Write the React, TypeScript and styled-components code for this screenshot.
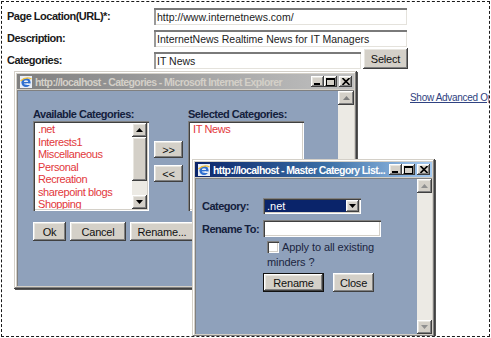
import React from "react";
import styled, { createGlobalStyle, css } from "styled-components";

const GlobalStyle = createGlobalStyle`
  html, body { margin: 0; padding: 0; background: #fff; }
  body { font-family: "Liberation Sans", Arial, sans-serif; }
  * { box-sizing: border-box; }
`;

const raised = css`
  background: #d4d0c8;
  box-shadow: inset -1px -1px #404040, inset 1px 1px #fff, inset -2px -2px #808080,
    inset 2px 2px #e8e6e0;
`;

const sunken = css`
  box-shadow: inset 1px 1px #808080, inset 2px 2px #404040, inset -1px -1px #fff,
    inset -2px -2px #d4d0c8;
`;

const Page = styled.div`
  position: relative;
  width: 489px;
  height: 336px;
  margin: 1px;
  border: 1px dashed #1a1a1a;
  overflow: hidden;
  background: #fff;
`;

const Form = styled.div`
  display: grid;
  grid-template-columns: 147px auto;
  grid-auto-rows: 22px;
  align-items: end;
  padding: 1px 0 0 5px;
`;

const Label = styled.div`
  align-self: center;
  padding-top: 4px;
  font-size: 11px;
  font-weight: bold;
  letter-spacing: -0.5px;
  color: #1a1a1a;
`;

const FieldRow = styled.div`
  display: flex;
  align-items: flex-end;
  gap: 2px;
`;

const TextField = styled.div<{ $w: number }>`
  width: ${(p) => p.$w}px;
  height: 17px;
  padding: 3px 0 0 3px;
  background: #fff;
  font-size: 10.5px;
  color: #222;
  white-space: nowrap;
  overflow: hidden;
  box-shadow: inset 0 2px #7a7a7a, inset 2px 0 #9a9a9a, inset -1px -1px #e4e2dc;
`;

const Button = styled.div<{ $w: number; $h?: number; $default?: boolean }>`
  ${raised};
  width: ${(p) => p.$w}px;
  height: ${(p) => p.$h ?? 19}px;
  display: flex;
  align-items: center;
  justify-content: center;
  font-size: 11px;
  letter-spacing: -0.2px;
  color: #111;
  white-space: nowrap;
  overflow: hidden;
  ${(p) =>
    p.$default &&
    css`
      border: 1px solid #111;
    `}
`;

const LinkRow = styled.div`
  margin-top: 23px;
  padding-left: 408px;
  white-space: nowrap;
  font-size: 10px;
  letter-spacing: -0.3px;
  color: #2f4281;
  text-decoration: underline;
`;

const Window = styled.div<{ $left: number; $top: number; $w: number; $h: number }>`
  position: absolute;
  left: ${(p) => p.$left}px;
  top: ${(p) => p.$top}px;
  width: ${(p) => p.$w}px;
  height: ${(p) => p.$h}px;
  padding: 3px;
  background: #d4d0c8;
  box-shadow: inset -1px -1px #404040, inset 1px 1px #d4d0c8, inset -2px -2px #808080,
    inset 2px 2px #fff, 1px 1px 0 #555;
  display: flex;
  flex-direction: column;
`;

const TitleBar = styled.div<{ $active?: boolean }>`
  height: 15px;
  flex: none;
  display: flex;
  align-items: center;
  gap: 2px;
  padding: 0 2px;
  background: ${(p) =>
    p.$active
      ? "linear-gradient(90deg, #0a246a 0%, #3a6ea5 55%, #a6caf0 100%)"
      : "linear-gradient(90deg, #808080 0%, #a8a8a8 60%, #c0c0c0 100%)"};
`;

const TitleText = styled.div<{ $active?: boolean }>`
  flex: 1;
  font-size: 10.5px;
  font-weight: bold;
  letter-spacing: -0.6px;
  color: ${(p) => (p.$active ? "#fff" : "#d4d0c8")};
  white-space: nowrap;
  overflow: hidden;
`;

const Controls = styled.div`
  display: flex;
  gap: 0;
`;

const CtlButton = styled.div<{ $gap?: boolean }>`
  ${raised};
  width: 13px;
  height: 11px;
  margin-left: ${(p) => (p.$gap ? 2 : 0)}px;
  display: flex;
  align-items: center;
  justify-content: center;
`;

const Body = styled.div`
  flex: 1;
  display: flex;
  margin-top: 1px;
  box-shadow: inset 1px 1px #808080;
  padding: 1px 0 0 1px;
  min-height: 0;
`;

const Client = styled.div<{ $pad: string }>`
  flex: 1;
  background: #8fa1bb;
  padding: ${(p) => p.$pad};
  min-width: 0;
`;

const ScrollBar = styled.div<{ $w?: number }>`
  width: ${(p) => p.$w ?? 15}px;
  flex: none;
  display: flex;
  flex-direction: column;
  background: #eceae4;
`;

const Arrow = styled.div`
  ${raised};
  height: 14px;
  flex: none;
  display: flex;
  align-items: center;
  justify-content: center;
`;

const Thumb = styled.div<{ $h: number }>`
  ${raised};
  height: ${(p) => p.$h}px;
  flex: none;
`;

const Track = styled.div`
  flex: 1;
`;

const WinLabel = styled.div`
  font-size: 11px;
  font-weight: bold;
  letter-spacing: -0.5px;
  color: #14203c;
  white-space: nowrap;
`;

const Columns = styled.div`
  display: flex;
  align-items: flex-start;
  gap: 5px;
`;

const Column = styled.div`
  display: flex;
  flex-direction: column;
  gap: 1px;
`;

const ArrowColumn = styled.div`
  display: flex;
  flex-direction: column;
  gap: 7px;
  margin-top: 33px;
`;

const ListBox = styled.div`
  ${sunken};
  width: 116px;
  height: 90px;
  background: #fff;
  padding: 2px;
  display: flex;
`;

const Items = styled.div`
  flex: 1;
  padding-left: 3px;
  overflow: hidden;
`;

const Item = styled.div`
  font-size: 11px;
  line-height: 12.5px;
  letter-spacing: -0.4px;
  color: #e2383c;
  white-space: nowrap;
`;

const ButtonRow = styled.div<{ $gap: number; $top: number }>`
  display: flex;
  gap: ${(p) => p.$gap}px;
  margin-top: ${(p) => p.$top}px;
`;

const RenameGrid = styled.div`
  display: grid;
  grid-template-columns: 61px auto;
  row-gap: 6px;
  align-items: center;
`;

const Select = styled.div`
  ${sunken};
  width: 98px;
  height: 16px;
  background: #fff;
  padding: 2px;
  display: flex;
`;

const SelectValue = styled.div`
  flex: 1;
  background: #0a246a;
  color: #fff;
  font-size: 11px;
  line-height: 12px;
  padding-left: 2px;
`;

const DropButton = styled.div`
  ${raised};
  width: 13px;
  display: flex;
  align-items: center;
  justify-content: center;
`;

const Input = styled.div`
  ${sunken};
  width: 118px;
  height: 17px;
  background: #fff;
`;

const CheckText = styled.div`
  width: 118px;
  padding-left: 4px;
  font-size: 11px;
  line-height: 15px;
  letter-spacing: -0.1px;
  color: #1b2540;
  margin-top: -3px;
`;

const Check = styled.span`
  ${sunken};
  display: inline-block;
  width: 12px;
  height: 12px;
  background: #fff;
  vertical-align: -2px;
  margin-right: 3px;
`;

const Spacer = styled.div``;

const IeIcon = () => (
  <svg width="14" height="14" viewBox="0 0 14 14">
    <rect x="1" y="1" width="12" height="12" fill="#e8eef8" />
    <circle cx="7" cy="7.5" r="4.6" fill="#2f6fd0" />
    <circle cx="7" cy="7.5" r="2.3" fill="#e8eef8" />
    <rect x="4" y="7" width="6.5" height="1.4" fill="#2f6fd0" />
    <rect x="7.5" y="8.4" width="4" height="1.6" fill="#e8eef8" />
    <path d="M1.5 6 Q7 1 12.5 4" stroke="#f3c23a" strokeWidth="1.2" fill="none" />
  </svg>
);

const Tri = ({ up, color = "#000" }: { up?: boolean; color?: string }) => (
  <svg width="7" height="4" viewBox="0 0 7 4">
    <path d={up ? "M0 4 L3.5 0 L7 4 Z" : "M0 0 L7 0 L3.5 4 Z"} fill={color} />
  </svg>
);

const WinControls = () => (
  <Controls>
    <CtlButton>
      <svg width="7" height="7" viewBox="0 0 7 7">
        <rect x="0" y="5" width="6" height="2" fill="#000" />
      </svg>
    </CtlButton>
    <CtlButton>
      <svg width="9" height="8" viewBox="0 0 9 8">
        <rect x="0.5" y="0.5" width="8" height="7" fill="none" stroke="#000" />
        <rect x="0" y="0" width="9" height="2" fill="#000" />
      </svg>
    </CtlButton>
    <CtlButton $gap>
      <svg width="8" height="7" viewBox="0 0 8 7">
        <path d="M0.5 0 L7.5 7 M7.5 0 L0.5 7" stroke="#000" strokeWidth="1.6" />
      </svg>
    </CtlButton>
  </Controls>
);

const available = [
  ".net",
  "Interests1",
  "Miscellaneous",
  "Personal",
  "Recreation",
  "sharepoint blogs",
  "Shopping",
];

const CategoriesWindow = () => (
  <Window $left={12} $top={69} $w={343} $h={218}>
    <TitleBar>
      <IeIcon />
      <TitleText>http://localhost - Categories - Microsoft Internet Explorer</TitleText>
      <WinControls />
    </TitleBar>
    <Body>
      <Client $pad="17px 0 0 15px">
        <Columns>
          <Column>
            <WinLabel>Available Categories:</WinLabel>
            <ListBox>
              <Items>
                {available.map((c) => (
                  <Item key={c}>{c}</Item>
                ))}
              </Items>
              <ScrollBar>
                <Arrow>
                  <Tri up />
                </Arrow>
                <Thumb $h={44} />
                <Track />
                <Arrow>
                  <Tri />
                </Arrow>
              </ScrollBar>
            </ListBox>
          </Column>
          <ArrowColumn>
            <Button $w={29} $h={17}>&gt;&gt;</Button>
            <Button $w={29} $h={17}>&lt;&lt;</Button>
          </ArrowColumn>
          <Column>
            <WinLabel>Selected Categories:</WinLabel>
            <ListBox>
              <Items>
                <Item>IT News</Item>
              </Items>
            </ListBox>
          </Column>
        </Columns>
        <ButtonRow $gap={4} $top={11}>
          <Button $w={33}>Ok</Button>
          <Button $w={56}>Cancel</Button>
          <Button $w={64}>Rename...</Button>
        </ButtonRow>
      </Client>
      <ScrollBar $w={16}>
        <Arrow>
          <Tri up color="#808080" />
        </Arrow>
        <Track />
        <Arrow>
          <Tri color="#808080" />
        </Arrow>
      </ScrollBar>
    </Body>
  </Window>
);

const RenameWindow = () => (
  <Window $left={190} $top={157} $w={243} $h={178}>
    <TitleBar $active>
      <IeIcon />
      <TitleText $active>http://localhost - Master Category List...</TitleText>
      <WinControls />
    </TitleBar>
    <Body>
      <Client $pad="19px 0 0 6px">
        <RenameGrid>
          <WinLabel>Category:</WinLabel>
          <Select>
            <SelectValue>.net</SelectValue>
            <DropButton>
              <Tri />
            </DropButton>
          </Select>
          <WinLabel>Rename To:</WinLabel>
          <Input />
          <Spacer />
          <CheckText>
            <Check />
            Apply to all existing minders ?
          </CheckText>
          <Spacer />
          <ButtonRow $gap={9} $top={-3}>
            <Button $w={61} $h={19} $default>
              Rename
            </Button>
            <Button $w={41} $h={19}>
              Close
            </Button>
          </ButtonRow>
        </RenameGrid>
      </Client>
      <ScrollBar $w={15}>
        <Arrow>
          <Tri up color="#909090" />
        </Arrow>
        <Track />
        <Arrow>
          <Tri color="#909090" />
        </Arrow>
      </ScrollBar>
    </Body>
  </Window>
);

const App = () => (
  <>
    <GlobalStyle />
    <Page>
      <Form>
        <Label>Page Location(URL)*:</Label>
        <TextField $w={253}>http://www.internetnews.com/</TextField>
        <Label>Description:</Label>
        <TextField $w={253}>InternetNews Realtime News for IT Managers</TextField>
        <Label>Categories:</Label>
        <FieldRow>
          <TextField $w={207}>IT News</TextField>
          <Button $w={45} $h={21}>
            Select
          </Button>
        </FieldRow>
      </Form>
      <LinkRow>Show Advanced Options</LinkRow>
      <CategoriesWindow />
      <RenameWindow />
    </Page>
  </>
);

export default App;
